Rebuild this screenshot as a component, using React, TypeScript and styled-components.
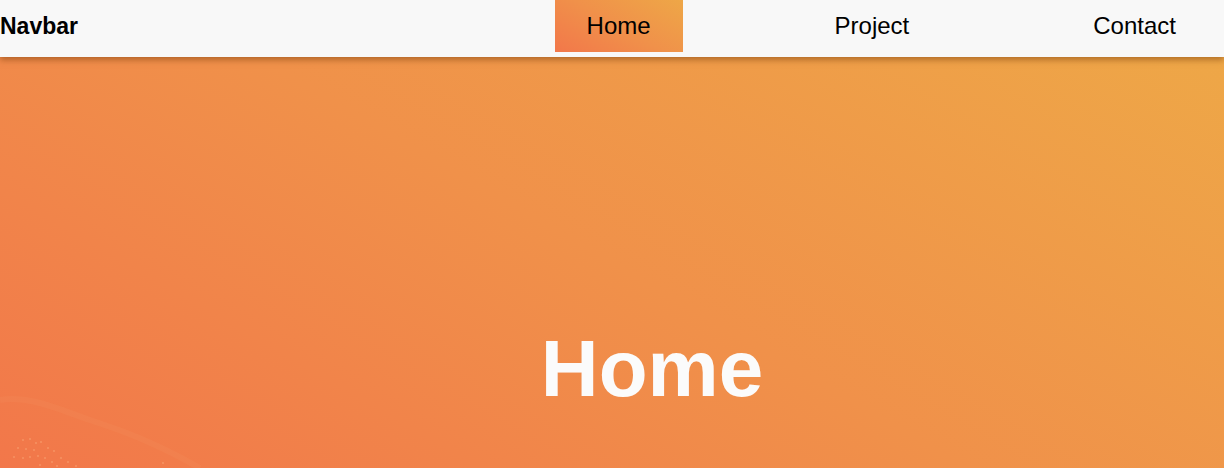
import React from "react";
import styled, { createGlobalStyle } from "styled-components";

const Global = createGlobalStyle`
  html, body { margin: 0; padding: 0; overflow: hidden; }
  body { font-family: "Liberation Sans", Arial, sans-serif; background: #f27a47; }
`;

const warm = "linear-gradient(30deg, #f2774a 0%, #f0914a 50%, #eea747 100%)";

const Page = styled.div`
  width: 1224px;
  height: 468px;
  display: flex;
  flex-direction: column;
  overflow: hidden;
`;

const NavBar = styled.nav`
  position: relative;
  z-index: 2;
  height: 57px;
  flex: 0 0 57px;
  background: #f8f8f8;
  display: flex;
  align-items: flex-start;
  justify-content: space-between;
  box-shadow: 0 3px 6px rgba(120, 60, 10, 0.5);
`;

const Brand = styled.div`
  height: 52px;
  display: flex;
  align-items: center;
  font-size: 23px;
  font-weight: 700;
  color: #000;
`;

const Links = styled.ul`
  list-style: none;
  margin: 0;
  padding: 0 16px 0 0;
  display: flex;
  gap: 120px;
`;

const LinkItem = styled.li<{ $active?: boolean }>`
  height: 52px;
  padding: 0 32px;
  display: flex;
  align-items: center;
  font-size: 24px;
  color: #000;
  background: ${(p) => (p.$active ? warm : "transparent")};
`;

const Hero = styled.section`
  position: relative;
  flex: 1;
  background: ${warm};
  padding: 272px 0 0 80px;
  display: flex;
  justify-content: center;
  align-items: flex-start;
`;

const Title = styled.h1`
  margin: 0;
  font-size: 80px;
  line-height: 1;
  font-weight: 700;
  color: #fbfbfb;
`;

const Decor = styled.svg`
  position: absolute;
  left: 0;
  bottom: 0;
  pointer-events: none;
`;

export default function App() {
  const dots = [
    [23, 440], [30, 439], [36, 443], [41, 442], [18, 448], [26, 449], [34, 450], [14, 457], [23, 458], [30, 457], [38, 456],
    [48, 448], [54, 451], [45, 458], [52, 462], [61, 458], [68, 462], [40, 465], [57, 466], [76, 466], [163, 463],
  ];
  return (
    <>
      <Global />
      <Page>
        <NavBar>
          <Brand>Navbar</Brand>
          <Links>
            <LinkItem $active>Home</LinkItem>
            <LinkItem>Project</LinkItem>
            <LinkItem>Contact</LinkItem>
          </Links>
        </NavBar>
        <Hero>
          <Title>Home</Title>
          <Decor width="260" height="100" viewBox="0 368 260 100">
            <path d="M0 400 C 30 395, 60 410, 90 420 S 150 440, 200 468" fill="none" stroke="rgba(255,200,150,0.06)" strokeWidth="6" />
            {dots.map(([x, y], i) => (
              <circle key={i} cx={x} cy={y} r="0.8" fill="rgba(255,210,160,0.5)" />
            ))}
          </Decor>
        </Hero>
      </Page>
    </>
  );
}
